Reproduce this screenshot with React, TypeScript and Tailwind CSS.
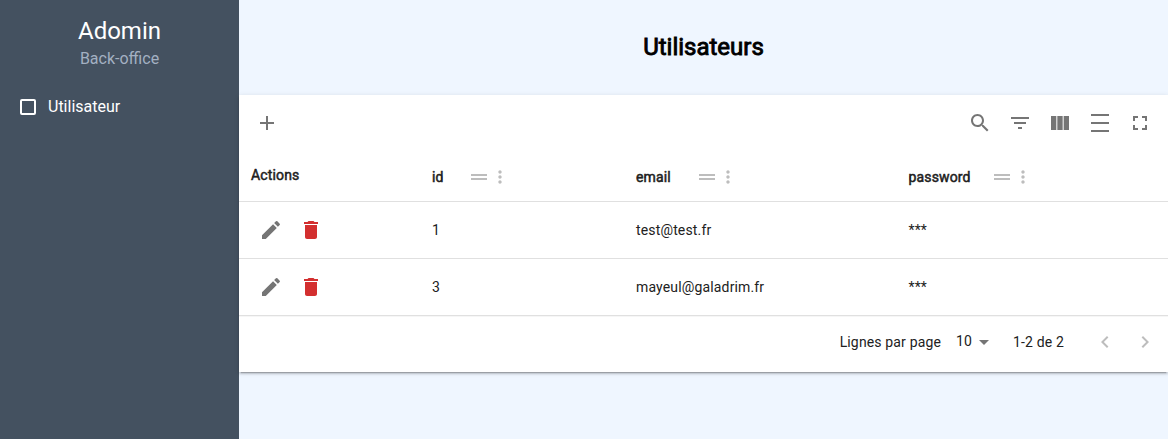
import React from 'react';

type IconProps = { d: string; className?: string };

function Icon({ d, className = 'size-6' }: IconProps) {
  return (
    <svg viewBox="0 0 24 24" fill="currentColor" className={`shrink-0 ${className}`} aria-hidden="true">
      <path d={d} />
    </svg>
  );
}

const icons = {
  add: 'M19 13h-6v6h-2v-6H5v-2h6V5h2v6h6v2z',
  search:
    'M15.5 14h-.79l-.28-.27C15.41 12.59 16 11.11 16 9.5 16 5.91 13.09 3 9.5 3S3 5.91 3 9.5 5.91 16 9.5 16c1.61 0 3.09-.59 4.23-1.57l.27.28v.79l5 4.99L20.49 19l-4.99-5zm-6 0C7.01 14 5 11.99 5 9.5S7.01 5 9.5 5 14 7.01 14 9.5 11.99 14 9.5 14z',
  filter: 'M10 18h4v-2h-4v2zM3 6v2h18V6H3zm3 7h12v-2H6v2z',
  columns: 'M14.67 5v14H9.33V5h5.34zm1 14H21V5h-5.33v14zm-7.34 0V5H3v14h5.33z',
  density: 'M3 3h18v2H3zm0 16h18v2H3zm0-8h18v2H3z',
  fullscreen: 'M7 14H5v5h5v-2H7v-3zm-2-4h2V7h3V5H5v5zm12 7h-3v2h5v-5h-2v3zM14 5v2h3v3h2V5h-5z',
  drag: 'M20 9H4v2h16V9zM4 15h16v-2H4v2z',
  more: 'M12 8c1.1 0 2-.9 2-2s-.9-2-2-2-2 .9-2 2 .9 2 2 2zm0 2c-1.1 0-2 .9-2 2s.9 2 2 2 2-.9 2-2-.9-2-2-2zm0 6c-1.1 0-2 .9-2 2s.9 2 2 2 2-.9 2-2-.9-2-2-2z',
  edit: 'M3 17.25V21h3.75L17.81 9.94l-3.75-3.75L3 17.25zM20.71 7.04c.39-.39.39-1.02 0-1.41l-2.34-2.34a.9959.9959 0 0 0-1.41 0l-1.83 1.83 3.75 3.75 1.83-1.83z',
  trash: 'M6 19c0 1.1.9 2 2 2h8c1.1 0 2-.9 2-2V7H6v12zM19 4h-3.5l-1-1h-5l-1 1H5v2h14V4z',
  caret: 'M7 10l5 5 5-5z',
  left: 'M15.41 7.41L14 6l-6 6 6 6 1.41-1.41L10.83 12z',
  right: 'M10 6L8.59 7.41 13.17 12l-4.58 4.59L10 18l6-6z',
};

const users = [
  { id: 1, email: 'test@test.fr' },
  { id: 3, email: 'mayeul@galadrim.fr' },
];

const grid = 'grid grid-cols-[193px_204px_272.5px_1fr] border-b border-[#e0e0e0]';

function HeaderCell({ label, width }: { label: string; width: string }) {
  return (
    <div className="flex items-center pt-px">
      <span className={`${width} [-webkit-text-stroke:0.5px_currentColor]`}>{label}</span>
      <Icon d={icons.drag} className="size-6 text-[#bdbdbd]" />
      <Icon d={icons.more} className="-ml-[1.5px] size-[20px] text-[#bdbdbd]" />
    </div>
  );
}

export default function App() {
  return (
    <div className="flex h-[439px] w-full overflow-hidden bg-[#eff6ff] font-['Roboto',sans-serif] text-[#212121]">
      <aside className="w-[239px] shrink-0 bg-[#445160] text-white">
        <div className="pt-[13px] text-center">
          <div className="text-2xl leading-9">Adomin</div>
          <div className="text-base leading-[19px] text-[#a3b0c2]">Back-office</div>
        </div>
        <nav className="mt-[27px] flex h-6 items-center gap-3 pl-5">
          <span className="size-4 rounded-[2px] border-2 border-white" />
          <span>Utilisateur</span>
        </nav>
      </aside>
      <main className="min-w-0 flex-1">
        <h1 className="flex h-[95px] items-center justify-center pb-0.5 text-2xl text-black [-webkit-text-stroke:0.9px_currentColor]">
          Utilisateurs
        </h1>
        <section className="h-[277px] bg-white text-sm tracking-[0.15px] shadow-[0_3px_1px_-2px_rgba(0,0,0,0.2),0_2px_2px_rgba(0,0,0,0.14),0_1px_5px_rgba(0,0,0,0.12)]">
          <div className="flex h-14 items-center justify-between px-4 text-[#757575]">
            <Icon d={icons.add} />
            <div className="flex gap-4">
              <Icon d={icons.search} />
              <Icon d={icons.filter} />
              <Icon d={icons.columns} />
              <Icon d={icons.density} />
              <Icon d={icons.fullscreen} />
            </div>
          </div>
          <div className={`${grid} h-[51px]`}>
            <div className="pl-3 pt-[14px] [-webkit-text-stroke:0.5px_currentColor]">Actions</div>
            <HeaderCell label="id" width="w-[35px]" />
            <HeaderCell label="email" width="w-[59px]" />
            <HeaderCell label="password" width="w-[81.5px]" />
          </div>
          {users.map((user) => (
            <div key={user.id} className={`${grid} h-[57px] items-center`}>
              <div className="flex gap-4 pl-5">
                <Icon d={icons.edit} className="size-6 text-[#757575]" />
                <Icon d={icons.trash} className="size-6 text-[#d32f2f]" />
              </div>
              <span>{user.id}</span>
              <span>{user.email}</span>
              <span>***</span>
            </div>
          ))}
          <div className="flex h-[52px] items-center justify-end pr-[11px] shadow-[inset_0_1px_0_rgba(97,97,97,0.06)]">
            <span>Lignes par page</span>
            <span className="ml-[15px] pb-0.5">10</span>
            <Icon d={icons.caret} className="size-6 text-[#757575]" />
            <span className="ml-[17px]">1-2 de 2</span>
            <Icon d={icons.left} className="ml-[29px] size-6 text-[#bdbdbd]" />
            <Icon d={icons.right} className="ml-4 size-6 text-[#bdbdbd]" />
          </div>
        </section>
      </main>
    </div>
  );
}
